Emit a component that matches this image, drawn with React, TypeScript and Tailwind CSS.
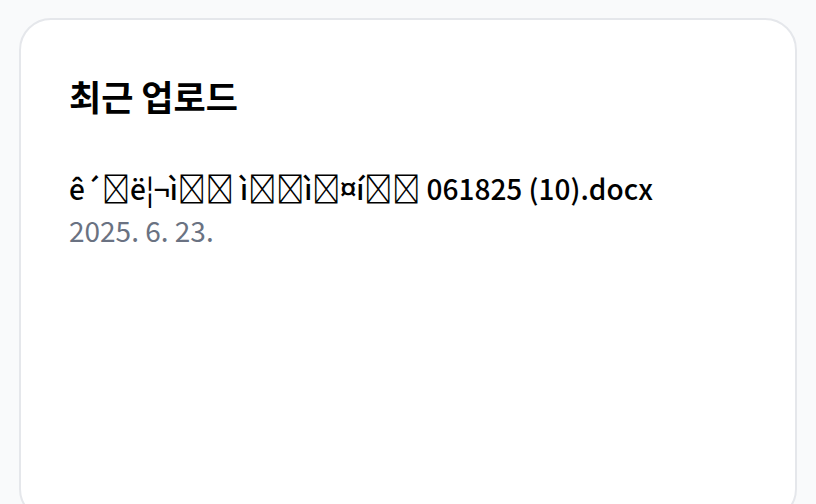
import React from 'react';

// the file name is stored mis-decoded; \uE000 shows as the font's missing-glyph box
const uploads = [
  {
    name: 'ê´\uE000ë¦¬ì\uE000\uE000 ì\uE000\uE000ì\uE000¤í\uE000\uE000 061825 (10).docx',
    date: '2025. 6. 23.',
  },
];

export default function App() {
  return (
    <div
      className="min-h-screen bg-gray-50 px-[19px] pt-[18px]"
      style={{ fontFamily: '"Noto Sans CJK KR", "Noto Sans", sans-serif' }}
    >
      <div className="h-[503px] rounded-[32px] border-2 border-gray-200 bg-white px-[48px] pt-[52px]">
        <h2 className="text-[35px] font-bold text-black leading-[48px]">최근 업로드</h2>
        <ul className="mt-[47px]">
          {uploads.map((u) => (
            <li key={u.name}>
              <p className="text-[28px] leading-[42px] font-medium text-black">{u.name}</p>
              <p className="text-[28px] leading-[42px] text-gray-500">{u.date}</p>
            </li>
          ))}
        </ul>
      </div>
    </div>
  );
}
